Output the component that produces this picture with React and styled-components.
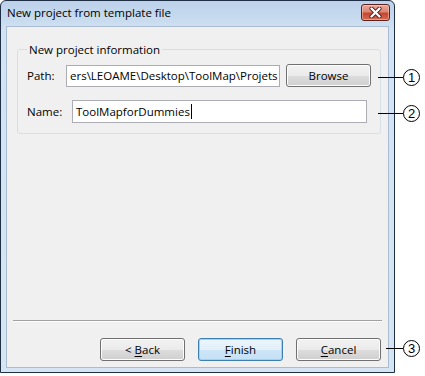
import React from 'react'
import styled, { createGlobalStyle } from 'styled-components'

const GlobalStyle = createGlobalStyle`
  html, body {
    margin: 0;
    padding: 0;
    background: #ffffff;
  }
  body {
    font-family: 'Segoe UI', 'Open Sans', 'Noto Sans', sans-serif;
    font-size: 11.5px;
    color: #000;
  }
`

const Stage = styled.div`
  position: relative;
  width: 425px;
  height: 376px;
`

const Window = styled.div`
  width: 393px;
  height: 371px;
  border: 1px solid #1f2f45;
  border-radius: 6px 6px 0 0;
  background: linear-gradient(to bottom, #bcd2ea 0px, #c9dcef 20px, #d3e3f3 30px, #d6e5f4 100%);
  display: flex;
  flex-direction: column;
  overflow: hidden;
`

const TitleBar = styled.div`
  height: 25px;
  display: flex;
  align-items: center;
  justify-content: space-between;
  padding: 0 4px 0 6px;
`

const Title = styled.span`
  font-size: 11.5px;
  color: #000;
  margin-top: -2px;
`

const CloseButton = styled.div`
  width: 27px;
  height: 15px;
  margin-top: -3px;
  border: 1px solid #5a2521;
  border-radius: 3px;
  background: linear-gradient(to bottom, #eba79a 0%, #dc8772 45%, #c84630 55%, #d66a52 100%);
  box-shadow: inset 0 0 0 1px rgba(255, 220, 210, 0.45);
  display: flex;
  align-items: center;
  justify-content: center;
`

const Client = styled.div`
  flex: 1;
  margin: 0 5px 4px 5px;
  background: #f0f0f0;
  border: 1px solid #a9bcd2;
  display: flex;
  flex-direction: column;
`

const GroupBox = styled.fieldset`
  margin: 15px 7px 0 10px;
  padding: 7px 0 10px 9px;
  border: 1px solid #d5dfe5;
  border-radius: 3px;
  display: flex;
  flex-direction: column;
  gap: 13px;
`

const Legend = styled.legend`
  padding: 0 2px;
  margin-left: 0;
`

const Row = styled.div`
  display: flex;
  align-items: center;
`

const Label = styled.span`
  width: ${({ $w }) => $w}px;
  flex-shrink: 0;
`

const TextBox = styled.div`
  width: ${({ $w }) => $w}px;
  height: ${({ $h }) => $h}px;
  box-sizing: border-box;
  border: 1px solid #abadb3;
  background: #fff;
  display: flex;
  align-items: center;
  padding: 0 3px;
  overflow: hidden;
  white-space: nowrap;
`

const Caret = styled.span`
  display: inline-block;
  width: 1px;
  height: 15px;
  background: #000;
  margin-left: 1px;
`

const Button = styled.div`
  width: 85px;
  height: 23px;
  box-sizing: border-box;
  border: 1px solid ${({ $default }) => ($default ? '#3c7fb1' : '#707070')};
  border-radius: 3px;
  background: ${({ $default }) =>
    $default
      ? 'linear-gradient(to bottom, #ecf5fc 0%, #e2eff9 50%, #cde5f7 51%, #c5e0f5 100%)'
      : 'linear-gradient(to bottom, #f2f2f2 0%, #ebebeb 50%, #dddddd 51%, #cfcfcf 100%)'};
  box-shadow: inset 0 0 0 1px ${({ $default }) => ($default ? '#9fd3f5' : '#fcfcfc')};
  display: flex;
  align-items: center;
  justify-content: center;
  margin-left: ${({ $ml }) => $ml || 0}px;
`

const Key = styled.span`
  text-decoration: underline;
  text-underline-offset: 2px;
`

const Spacer = styled.div`
  flex: 1;
`

const Separator = styled.div`
  margin: 0 6px 0 6px;
  height: 1px;
  background: #a0a0a0;
  border-bottom: 1px solid #ffffff;
`

const ButtonRow = styled.div`
  display: flex;
  justify-content: flex-end;
  padding: 16px 7px 6px 0;
`

const Callout = styled.div`
  position: absolute;
  left: ${({ $x }) => $x}px;
  top: ${({ $y }) => $y}px;
  display: flex;
  align-items: center;
`

const Leader = styled.div`
  width: ${({ $w }) => $w}px;
  height: 1px;
  background: #000;
`

const Bubble = styled.div`
  width: 15px;
  height: 15px;
  border: 1.3px solid #000;
  border-radius: 50%;
  display: flex;
  align-items: center;
  justify-content: center;
  font-family: 'Liberation Sans', Arial, sans-serif;
  font-size: 13px;
  line-height: 1;
  background: #fff;
`

const CloseIcon = () => (
  <svg width="13" height="11" viewBox="0 0 13 11">
    <path d="M2.5 1.5 L10.5 9.5 M10.5 1.5 L2.5 9.5" stroke="#4a1a16" strokeWidth="4" strokeLinecap="round" />
    <path d="M2.5 1.5 L10.5 9.5 M10.5 1.5 L2.5 9.5" stroke="#ffffff" strokeWidth="2.4" strokeLinecap="round" />
  </svg>
)

export default function App() {
  return (
    <Stage>
      <GlobalStyle />
      <Window>
        <TitleBar>
          <Title>New project from template file</Title>
          <CloseButton>
            <CloseIcon />
          </CloseButton>
        </TitleBar>
        <Client>
          <GroupBox>
            <Legend>New project information</Legend>
            <Row>
              <Label $w={39}>Path:</Label>
              <TextBox $w={214} $h={22}>ers\LEOAME\Desktop\ToolMap\Projets</TextBox>
              <Button $ml={6}>Browse</Button>
            </Row>
            <Row>
              <Label $w={45}>Name:</Label>
              <TextBox $w={295} $h={23}>
                ToolMapforDummies
                <Caret />
              </TextBox>
            </Row>
          </GroupBox>
          <Spacer />
          <Separator />
          <ButtonRow>
            <Button>
              &lt;&nbsp;<Key>B</Key>ack
            </Button>
            <Button $default $ml={13}>
              <Key>F</Key>inish
            </Button>
            <Button $ml={13}>
              <Key>C</Key>ancel
            </Button>
          </ButtonRow>
        </Client>
      </Window>
      <Callout $x={378} $y={69}>
        <Leader $w={25} />
        <Bubble>1</Bubble>
      </Callout>
      <Callout $x={378} $y={105}>
        <Leader $w={25} />
        <Bubble>2</Bubble>
      </Callout>
      <Callout $x={386} $y={340}>
        <Leader $w={17} />
        <Bubble>3</Bubble>
      </Callout>
    </Stage>
  )
}
